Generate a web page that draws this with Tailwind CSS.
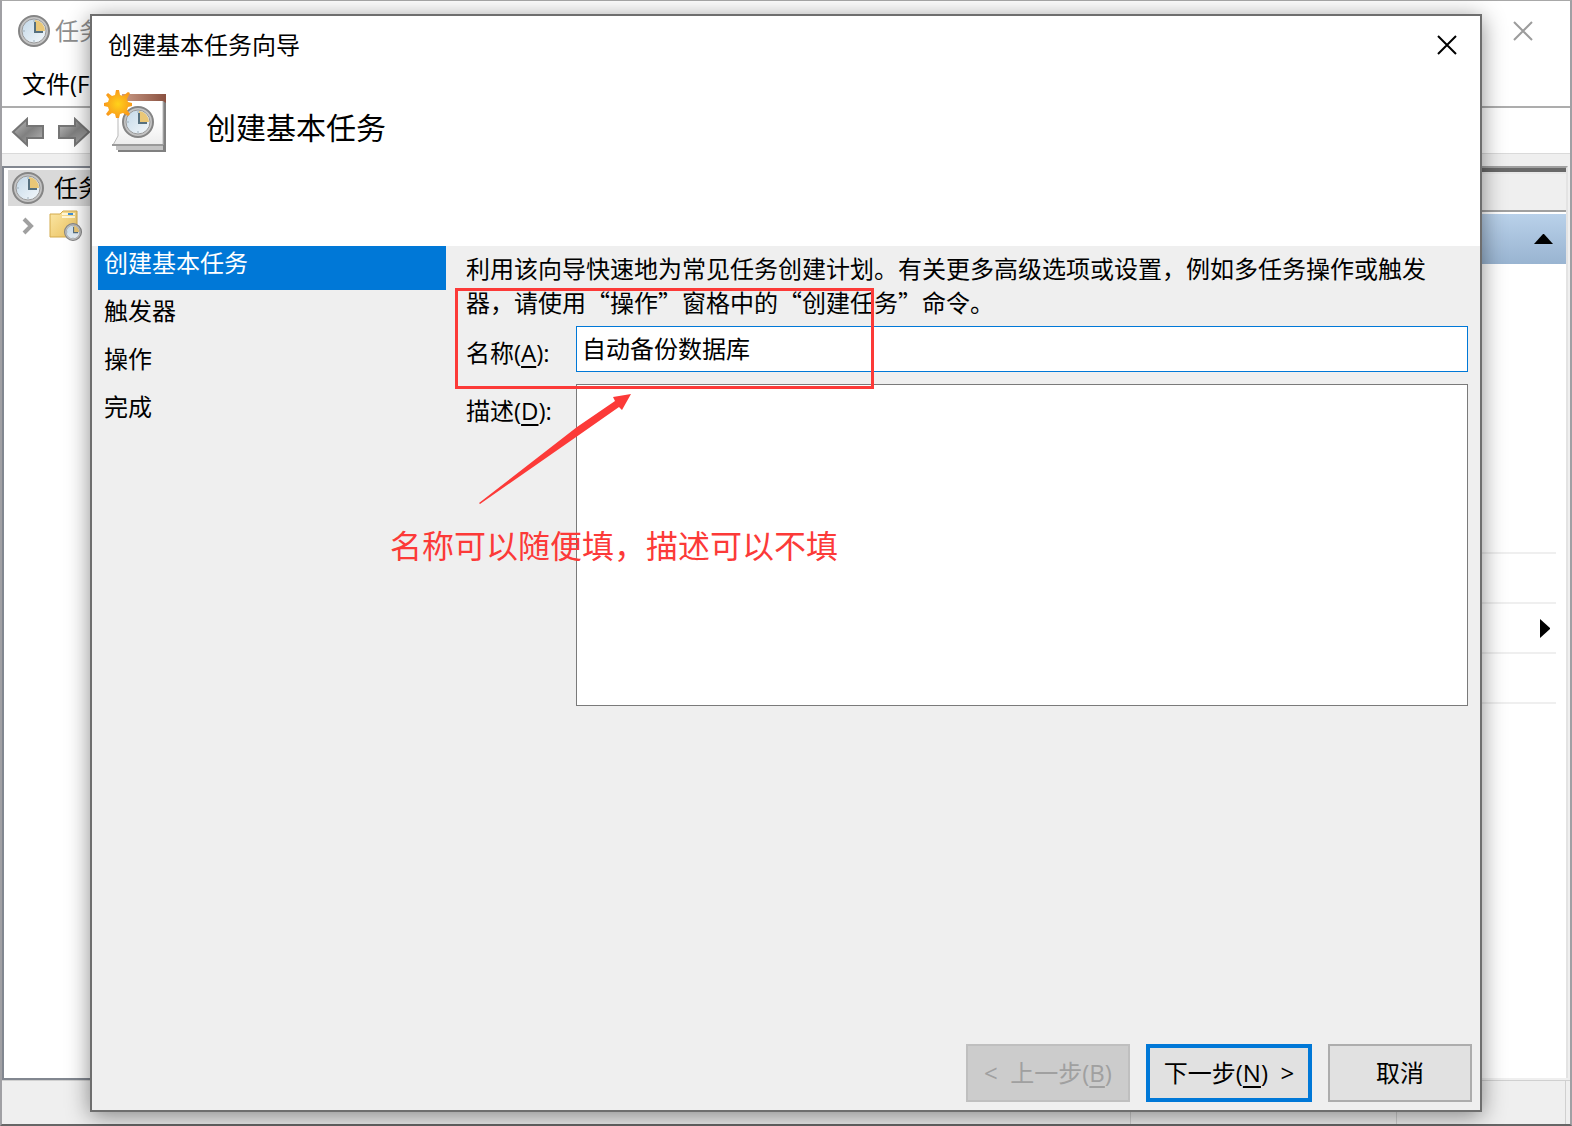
<!DOCTYPE html>
<html lang="zh-CN">
<head>
  <meta charset="UTF-8" />
  <meta name="viewport" content="width=device-width, initial-scale=1.0"/>
  <title>创建基本任务向导</title>
  <script src="https://cdn.jsdelivr.net/npm/@tailwindcss/browser@4"></script>
</head>
<body class="bg-[#a0a0a4] text-black text-[24px] leading-[34px] font-['Open_Sans','Noto_Sans_CJK_SC',sans-serif]">
  <!-- Shared gradients and clock face -->
  <svg class="absolute size-0" aria-hidden="true">
    <defs>
      <linearGradient id="face" x1="0" y1="0" x2="1" y2="1">
        <stop offset="0" stop-color="#c3d8e8"/>
        <stop offset="1" stop-color="#f4f8fb"/>
      </linearGradient>
      <linearGradient id="arrow" x1="0" y1="0" x2="1" y2="1">
        <stop offset="0" stop-color="#c0c0c0"/>
        <stop offset=".5" stop-color="#808080"/>
        <stop offset="1" stop-color="#b8b8b8"/>
      </linearGradient>
      <linearGradient id="folder" x1="0" y1="0" x2="1" y2="1">
        <stop offset="0" stop-color="#fbe7a6"/>
        <stop offset="1" stop-color="#e9bf5c"/>
      </linearGradient>
      <linearGradient id="roof" x1="0" y1="0" x2="1" y2="0">
        <stop offset="0" stop-color="#c99a86"/>
        <stop offset="1" stop-color="#8a5140"/>
      </linearGradient>
      <linearGradient id="page" x1="0" y1="0" x2="0" y2="1">
        <stop offset=".5" stop-color="#ffffff"/>
        <stop offset="1" stop-color="#ececec"/>
      </linearGradient>
      <radialGradient id="sun">
        <stop offset="0" stop-color="#ffd21a"/>
        <stop offset="1" stop-color="#f99a1b"/>
      </radialGradient>
      <symbol id="clock" viewBox="0 0 32 32">
        <circle cx="16" cy="16" r="15" fill="#c4c4c4" stroke="#858585" stroke-width="2"/>
        <circle cx="16" cy="16" r="12" fill="url(#face)" stroke="#9a9a9a" stroke-width="1"/>
        <path d="M17 16V5a11 11 0 0 1 10 11z" fill="#eac777"/>
        <path d="M17 7v11M16 17h9" fill="none" stroke="#56707f" stroke-width="2"/>
        <path d="M16 5v2M5 16h2M16 25v2" stroke="#9fb0bb" stroke-width="1"/>
      </symbol>
    </defs>
  </svg>

  <div class="relative min-h-screen flex flex-col">
    <!-- Task Scheduler main window -->
    <div class="grow flex flex-col bg-white border-x-2 border-t border-b-2 border-x-[#a0a0a4] border-t-[#a8a8a8] border-b-[#666666]">
      <div class="h-[60px] flex items-center justify-between pl-4 pr-[37px]">
        <div class="flex items-center gap-[5px] text-[#8e8e8e]">
          <svg class="size-8"><use href="#clock"/></svg>
          <span>任务</span>
        </div>
        <button type="button" aria-label="关闭主窗口">
          <svg class="size-5" viewBox="0 0 20 20"><path d="M1 1l18 18M19 1L1 19" stroke="#9c9c9c" stroke-width="2"/></svg>
        </button>
      </div>
      <nav class="h-[47px] flex items-center pl-5 border-b-2 border-[#adadad]">
        <button type="button">文件(F)</button>
      </nav>
      <div class="h-[46px] flex items-center gap-3 pt-[3px] pl-[9px] border-b border-[#dadada]">
        <button type="button" aria-label="后退">
          <svg class="w-[34px] h-[30px]" viewBox="0 0 34 30"><path d="M2 15L16 2v7h16v12H16v7z" fill="url(#arrow)" stroke="#757575" stroke-width="2"/></svg>
        </button>
        <button type="button" aria-label="前进">
          <svg class="w-[34px] h-[30px]" viewBox="0 0 34 30"><path d="M32 15L18 2v7H2v12h16v7z" fill="url(#arrow)" stroke="#757575" stroke-width="2"/></svg>
        </button>
      </div>

      <div class="grow flex justify-between bg-[#efefef] pt-3">
        <!-- Tree pane -->
        <div class="w-[400px] bg-white border-2 border-[#828790] pl-1 pt-[2px]">
          <div class="h-9 flex items-center gap-[10px] pl-1 bg-[#d9d9d9]">
            <svg class="size-8"><use href="#clock"/></svg>
            <span>任务</span>
          </div>
          <div class="h-10 flex items-center gap-[14px] pl-[14px]">
            <svg class="w-3 h-[18px]" viewBox="0 0 12 18"><path d="M2 2l7 7-7 7" fill="none" stroke="#a0a0a0" stroke-width="4"/></svg>
            <svg class="w-[34px] h-8" viewBox="0 0 34 32">
              <path d="M2 4h10l3-3h14v26H2z" fill="url(#folder)" stroke="#d3aa4c" stroke-width="1"/>
              <path d="M14 4h13M14 7h13" stroke="#fff6d6" stroke-width="2"/>
              <path d="M20 4h5" stroke="#3f8fd6" stroke-width="2"/>
              <svg x="16" y="13" width="18" height="18" viewBox="0 0 32 32"><use href="#clock"/></svg>
            </svg>
          </div>
        </div>
        <!-- Actions pane -->
        <div class="w-[400px] flex flex-col bg-white border-t-2 border-t-[#a0a0a0] border-r-2 border-r-[#e3e3e3] mr-[2px] mb-[2px]">
          <div class="h-[6px] bg-[#696969] border-b-2 border-[#e8e8e8]"></div>
          <div class="h-[38px] bg-[#efefef] border-b-2 border-[#a0a0a0]"></div>
          <div class="h-[50px] mt-[2px] flex items-center justify-end pr-[13px] bg-linear-to-b from-[#b9d1ea] to-[#99b4d1]">
            <svg class="w-[19px] h-[10px]" viewBox="0 0 19 10"><path d="M0 10L9 0h1l9 10z"/></svg>
          </div>
          <div class="mt-[288px] mr-[10px] divide-y-2 divide-[#efefef] border-y-2 border-[#efefef]">
            <div class="h-[50px]"></div>
            <div class="h-[50px] flex items-center justify-end pr-[6px]">
              <svg class="w-[10px] h-[19px]" viewBox="0 0 10 19"><path d="M0 0l10 9v1L0 19z"/></svg>
            </div>
            <div class="h-[48px]"></div>
          </div>
        </div>
      </div>
      <!-- Status bar -->
      <div class="h-11 flex justify-end border-t border-[#d0d0d0] bg-[#efefef]">
        <div class="w-[266px] border-l border-[#d0d0d0]"></div>
        <div class="w-[170px] border-x border-[#d0d0d0] mr-1"></div>
      </div>
    </div>

    <!-- Wizard dialog -->
    <div role="dialog" class="absolute inset-x-[90px] inset-y-[14px] flex flex-col bg-[#efefef] border-2 border-[#6e6e6e] shadow-[0_4px_22px_rgba(0,0,0,0.45)]">
      <header class="h-[230px] bg-white">
        <div class="h-[58px] flex items-center justify-between pl-4 pr-[23px]">
          <span>创建基本任务向导</span>
          <button type="button" aria-label="关闭">
            <svg class="size-5" viewBox="0 0 20 20"><path d="M1 1l18 18M19 1L1 19" stroke="#000" stroke-width="2"/></svg>
          </button>
        </div>
        <div class="flex pl-3 pt-4 gap-[38px]">
          <svg class="size-16" viewBox="0 0 64 64">
            <path d="M14 10h48v52H14z" fill="#808080"/>
            <path d="M12 56h47v4H12z" fill="#c4c4c4"/>
            <path d="M14 8h45v47H9l5-9z" fill="url(#page)" stroke="#b9b9b9" stroke-width="1"/>
            <path d="M8 55h51" stroke="#9a9a9a" stroke-width="2"/>
            <path d="M18 4h44v9l-3-2H18z" fill="url(#roof)"/>
            <svg x="18" y="16" width="32" height="32" viewBox="0 0 32 32"><use href="#clock"/></svg>
            <path d="M12 0h3l1 5 3 1 5-4 2 1-3 6 1 3 4 1v3l-4 1-1 3 3 4-2 2-5-3-3 1-1 4h-3l-1-4-3-1-4 3-2-2 3-4-1-3-4-1v-3l4-1 1-3-3-4 2-2 4 3 3-1z" fill="url(#sun)"/>
          </svg>
          <h1 class="text-[30px] leading-[40px] pt-[18px]">创建基本任务</h1>
        </div>
      </header>

      <div class="grow flex pl-[6px] pr-3">
        <ul class="w-[348px] shrink-0">
          <li class="h-11 mb-1 pl-[6px] bg-[#0078d7] text-white">创建基本任务</li>
          <li class="h-11 mb-1 pl-[6px]">触发器</li>
          <li class="h-11 mb-1 pl-[6px]">操作</li>
          <li class="h-11 mb-1 pl-[6px]">完成</li>
        </ul>
        <form class="grow pl-5 pt-[5px]">
          <p class="font-['Noto_Sans_CJK_SC',sans-serif]">利用该向导快速地为常见任务创建计划。有关更多高级选项或设置，例如多任务操作或触发器，请使用“操作”窗格中的“创建任务”命令。</p>
          <div class="flex mt-[7px]">
            <label for="taskName" class="w-[110px] shrink-0 pt-[10px]">名称(<u class="underline-offset-4">A</u>):</label>
            <input id="taskName" type="text" value="自动备份数据库" class="grow h-[46px] px-[5px] pb-1 bg-white border border-[#0078d7] outline-none"/>
          </div>
          <div class="flex mt-3">
            <label for="taskDesc" class="w-[110px] shrink-0 pt-[10px]">描述(<u class="underline-offset-4">D</u>):</label>
            <textarea id="taskDesc" class="grow h-[322px] px-[5px] bg-white border border-[#7a7a7a] resize-none outline-none"></textarea>
          </div>
        </form>
      </div>

      <footer class="flex justify-end gap-4 p-2">
        <button type="button" disabled class="w-[164px] h-[58px] bg-[#cccccc] border-2 border-[#bfbfbf] text-[#a0a0a0] whitespace-nowrap">&lt;&nbsp; 上一步(<u class="underline-offset-4">B</u>)</button>
        <button type="button" class="w-[166px] h-[58px] bg-[#e1e1e1] border-4 border-[#0078d7] whitespace-nowrap">下一步(<u class="underline-offset-4">N</u>)&nbsp; &gt;</button>
        <button type="button" class="w-[144px] h-[58px] bg-[#e1e1e1] border-2 border-[#adadad] whitespace-nowrap">取消</button>
      </footer>
    </div>

    <!-- Annotations drawn over the dialog -->
    <div class="absolute left-[455px] top-[288px] w-[419px] h-[101px] border-3 border-[#fc3a38] pointer-events-none"></div>
    <svg class="absolute left-[479px] top-[393px] w-[153px] h-[112px] pointer-events-none" viewBox="0 0 153 112">
      <path d="M0 110L98 34 136 8l-2-4L152 1l-9 16-3-3L100 42 1 111z" fill="#fc3a38"/>
    </svg>
    <p class="absolute left-[390px] top-[524px] text-[32px] leading-[44px] text-[#fc3a38] whitespace-nowrap pointer-events-none">名称可以随便填，描述可以不填</p>
  </div>
</body>
</html>
